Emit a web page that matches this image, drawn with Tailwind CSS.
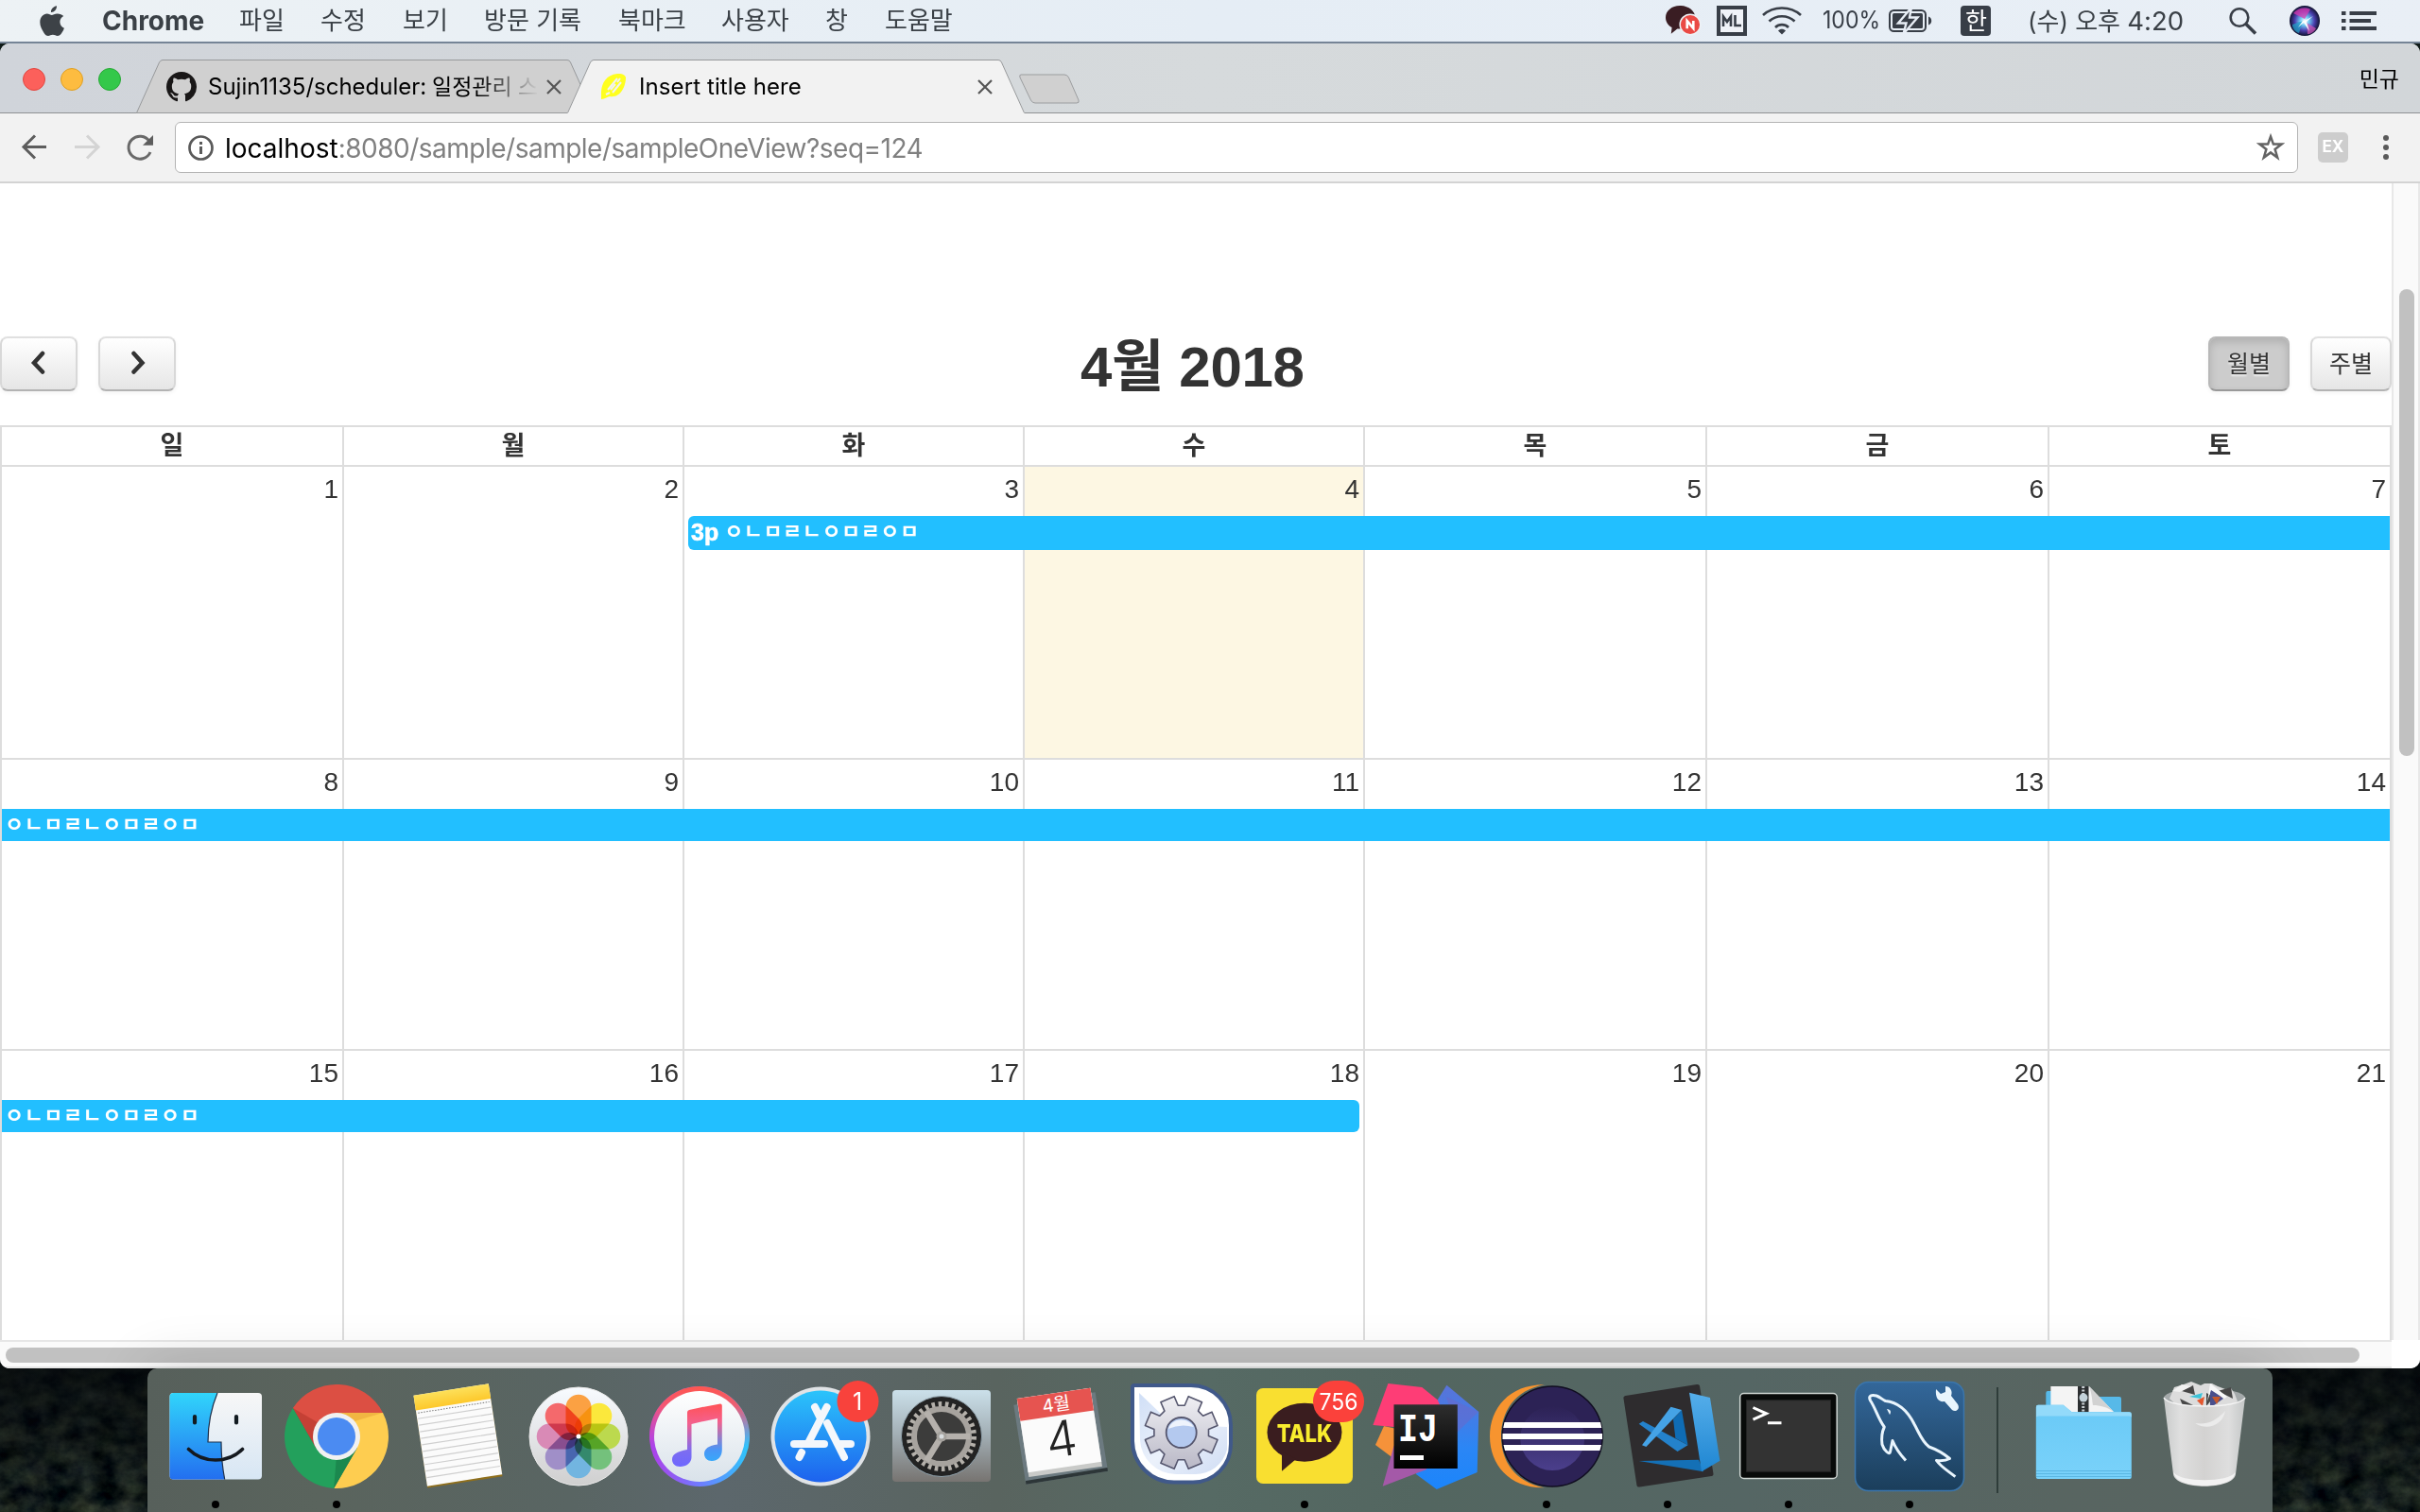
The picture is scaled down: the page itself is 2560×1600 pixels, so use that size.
<!DOCTYPE html>
<html lang="ko">
<head>
<meta charset="utf-8">
<title>Insert title here</title>
<script src="https://cdn.jsdelivr.net/npm/@tailwindcss/browser@4"></script>
</head>
<body class="relative h-[1600px] w-[2560px] overflow-hidden bg-[#101b19] font-['Inter','Noto_Sans_CJK_KR',sans-serif]">

<!-- Desktop wallpaper: dark forest -->
<svg class="absolute left-0 top-[1430px]" width="2560" height="170">
  <defs>
    <filter id="forest" x="0" y="0" width="100%" height="100%" color-interpolation-filters="sRGB">
      <feTurbulence type="fractalNoise" baseFrequency="0.04 0.05" numOctaves="5" seed="8"/>
      <feColorMatrix values="0.36 0.04 0 0 -0.115  0.38 0 0 0 -0.07  0.26 0 0.06 0 -0.05  0 0 0 0 1"/>
    </filter>
    <linearGradient id="dusk" x1="0" y1="0" x2="0" y2="1"><stop offset="0" stop-color="#05080b" stop-opacity=".8"/><stop offset="1" stop-color="#05080b" stop-opacity="0"/></linearGradient>
  </defs>
  <rect width="2560" height="170" fill="#14201d"/>
  <rect width="2560" height="170" filter="url(#forest)"/>
  <rect width="2560" height="170" fill="url(#dusk)"/>
</svg>

<div class="relative flex h-[1448px] flex-col">
  <!-- Menu bar -->
  <header class="flex h-[46px] shrink-0 items-center border-b-2 border-[#758496] bg-gradient-to-r from-[#edf2f5] via-[#e5edf5] to-[#e9eff6] text-[26px] leading-[44px] text-[#3a4046]">
    <svg class="ml-[42px] mr-[40px] shrink-0" width="26" height="32" viewBox="0 0 26 32" fill="#3d4247"><path d="M18 .2c.3 3.600-2.900 6.900-6 6.700C11.600 3.600 14.800.5 18 .2zM25.200 10.900c-2.500 1.500-3.900 3.600-3.800 6.400.1 3.200 1.800 5.400 4.500 6.500-.6 2-1.700 3.900-3 5.600-1.100 1.500-2.300 2.500-4.100 2.500-1.900 0-2.600-1.100-4.900-1.100-2.300 0-3.100 1.100-4.900 1.100-1.900 0-3.200-1.300-4.400-3C2.100 25.400.3 21.500.3 17.600.3 11.800 4 8.600 7.700 8.500c2 0 3.900 1.400 5.100 1.400 1.200 0 3.300-1.600 5.900-1.500 2.700.1 5 .9 6.500 2.500z"/></svg>
    <span class="w-[145px] shrink-0 text-[28px] font-bold">Chrome</span>
    <span class="w-[86px] shrink-0">파일</span>
    <span class="w-[87px] shrink-0">수정</span>
    <span class="w-[86px] shrink-0">보기</span>
    <span class="w-[142px] shrink-0">방문 기록</span>
    <span class="w-[109px] shrink-0">북마크</span>
    <span class="w-[110px] shrink-0">사용자</span>
    <span class="w-[63px] shrink-0">창</span>
    <span class="w-[120px] shrink-0">도움말</span>
    <div class="ml-auto flex h-full items-center">
      <svg width="246" height="44" viewBox="1758 0 246 44" class="shrink-0">
        <path d="M1777 6c-8.500 0-15 5.500-15 12.500 0 4.600 2.600 8.400 6.600 10.600l-.8 6.600 6.500-5.200c12 .8 19-5 19-12C1793.300 11.500 1786 6 1777 6z" fill="#3a1d23"/>
        <circle cx="1788" cy="26" r="10.800" fill="#ea4a45" stroke="#eef2f6" stroke-width="1.500"/>
        <path d="M1784.700 30.300v-8.200l6.600 7.800v-8" fill="none" stroke="#fff" stroke-width="2.600"/>
        <rect x="1818" y="8" width="28" height="28" fill="#f0f3f8" stroke="#383e47" stroke-width="4"/>
        <path d="M1823 28V17.500l4 5.500 4-5.500V28M1835.500 16v11h6.500" fill="none" stroke="#383e47" stroke-width="2.600"/>
        <g fill="none" stroke="#383e47" stroke-width="2.700"><path d="M1865 16c11-10 29-10 40 0M1871.500 22.500c7.500-7 19.500-7 27 0M1878 29c4-3.800 10-3.800 14 0"/></g>
        <path d="M1881 32.500c2.300-2.300 5.700-2.300 8 0l-4 4z" fill="#383e47"/>
        <text x="1928" y="30" font-size="25" fill="#383e47" textLength="61" lengthAdjust="spacingAndGlyphs">100%</text>
      </svg>
      <svg width="142" height="44" viewBox="1995 0 142 44" class="-ml-[9px] shrink-0">
        <rect x="1999" y="11" width="38" height="22" rx="4.500" fill="none" stroke="#383e47" stroke-width="2"/>
        <rect x="2002" y="14" width="32" height="16" rx="1.500" fill="#383e47"/>
        <path d="M2040 17.500c4.300 1 4.300 8 0 9z" fill="#383e47"/>
        <path d="M2022 8l-14 16.500h8.500L2013.500 36l15-17.500h-8.500z" fill="#383e47" stroke="#e8eef6" stroke-width="2.400"/>
        <rect x="2074" y="6" width="32" height="32" rx="4" fill="#383e47"/>
        <text x="2079" y="31" font-size="25" fill="#fff">한</text>
      </svg>
      <span class="w-[212px] shrink-0 whitespace-nowrap pl-[8px]">(수) 오후 <span class="text-[27.500px]">4:20</span></span>
      <svg width="211" height="44" viewBox="2349 0 211 44" class="shrink-0">
        <circle cx="2369" cy="18.500" r="9.300" fill="none" stroke="#383e47" stroke-width="2.600"/><path d="M2375.500 25l10.500 10.500" stroke="#383e47" stroke-width="3.600"/>
        <defs><radialGradient id="siri"><stop offset="0" stop-color="#fff"/><stop offset=".3" stop-color="#6cc8f2"/><stop offset=".65" stop-color="#4a3fae"/><stop offset="1" stop-color="#10132e"/></radialGradient></defs>
        <circle cx="2438" cy="22" r="16" fill="url(#siri)"/>
        <path d="M2426 14c4-5 12-7 18-4l-6 10z" fill="#d93ab0" opacity=".75"/><path d="M2440 24l10 6c-2 4-6 6-9 6z" fill="#d257b5" opacity=".7"/><path d="M2425 26l11-4-4 13c-4-1-7-5-7-9z" fill="#1fa7c9" opacity=".7"/>
        <path d="M2428 23l10-1 9-5-7 6 3 10-6-9-6 5 5-7z" fill="#fff" opacity=".9"/>
        <path d="M2477 12h4.500v4h-4.500zM2477 20h4.500v4h-4.500zM2477 28h4.500v4h-4.500zM2485.500 12h28.500v4h-28.500zM2485.500 20h22.500v4h-22.500zM2485.500 28h28.500v4h-28.500z" fill="#383e47"/>
      </svg>
    </div>
  </header>

  <!-- Browser window -->
  <div class="flex h-[1402px] flex-col overflow-hidden rounded-t-[10px] rounded-b-[10px] bg-white">
    <!-- Tab strip -->
    <div class="flex h-[74px] shrink-0 border-b border-[#8f9193] bg-gradient-to-r from-[#d0d4da] via-[#d6dadc] to-[#d2d6d9]">
      <div class="flex w-[144px] shrink-0 gap-4 pl-6 pt-[26px]">
        <i class="size-6 rounded-full border border-[#e2463f] bg-[#fc605b]"></i>
        <i class="size-6 rounded-full border border-[#dfa023] bg-[#fdbc40]"></i>
        <i class="size-6 rounded-full border border-[#27a935] bg-[#34c84a]"></i>
      </div>
      <div class="relative h-[74px] w-[484px] shrink-0">
        <svg class="absolute left-0 top-0" width="484" height="74" viewBox="0 0 484 74"><path d="M.5 73.500L24.500 20Q26 17.500 28 17.500H456Q458.500 17.500 459.500 20L483.500 73.500z" fill="#d0d0d0" stroke="#97999b"/></svg>
        <div class="relative flex h-full pl-8 pt-[18px]">
          <svg class="mt-[12px] shrink-0" width="32" height="32" viewBox="0 0 16 16" fill="#191717"><path d="M8 0C3.580 0 0 3.580 0 8c0 3.540 2.290 6.530 5.470 7.590.4.070.55-.17.55-.38 0-.19-.01-.82-.01-1.490-2.010.37-2.530-.49-2.690-.94-.09-.23-.48-.94-.82-1.130-.28-.15-.68-.52-.01-.53.63-.01 1.080.58 1.230.82.72 1.210 1.870.87 2.330.66.070-.52.280-.87.510-1.070-1.780-.2-3.640-.89-3.640-3.950 0-.87.310-1.590.82-2.150-.08-.2-.36-1.020.08-2.120 0 0 .67-.21 2.200.82.640-.18 1.320-.27 2-.27s1.360.090 2 .27c1.530-1.040 2.200-.82 2.200-.82.440 1.100.160 1.920.080 2.120.510.560.820 1.270.820 2.150 0 3.070-1.870 3.750-3.650 3.950.290.250.540.730.540 1.480 0 1.070-.010 1.930-.010 2.200 0 .210.150.460.550.380A8.010 8.010 0 0 0 16 8c0-4.420-3.580-8-8-8z"/></svg>
          <span class="ml-3 w-[351px] shrink-0 whitespace-nowrap text-[24px] leading-[56px] text-black [mask-image:linear-gradient(to_right,black_285px,transparent_350px)]">Sujin1135/scheduler: <span class="-ml-px text-[23px]">일정관리 스</span></span>
          <svg class="ml-[7px] mt-[20px] shrink-0" width="16" height="16" stroke="#555" stroke-width="2.200"><path d="M1 1l14 14M15 1L1 15"/></svg>
        </div>
      </div>
      <div class="relative -ml-[28px] h-[74px] w-[484px] shrink-0">
        <svg class="absolute left-0 top-0" width="484" height="74" viewBox="0 0 484 74"><path d="M0 74L24.500 20Q26 17.500 28 17.500H456Q458.500 17.500 459.500 20L484 74z" fill="#f2f2f2"/><path d="M.5 73.500L24.500 20Q26 17.500 28 17.500H456Q458.500 17.500 459.500 20L483.500 73.500" fill="none" stroke="#97999b"/></svg>
        <div class="relative flex h-full pl-9 pt-[18px]">
          <svg class="mt-[14px] shrink-0" width="27" height="27" viewBox="0 0 27 27"><path d="M0 27C-1 14 2 2 17 0c5-.6 9 2 9 4 0 10-6 22-17 20-2 0-5 3-9 3z" fill="#ffff1f"/><path d="M7 17L17 5M12 20L21 9M9 20l-4 2M15 11l-5 6M20 5l-3 4" stroke="#f2f2f2" stroke-width="2"/></svg>
          <span class="ml-[13px] w-[358px] shrink-0 whitespace-nowrap text-[24px] leading-[56px] tracking-[0.1px] text-black">Insert title here</span>
          <svg class="mt-[20px] shrink-0" width="16" height="16" stroke="#555" stroke-width="2.200"><path d="M1 1l14 14M15 1L1 15"/></svg>
        </div>
      </div>
      <svg class="-ml-[7px] mt-[32px] shrink-0" width="66" height="32" viewBox="0 0 66 32"><path d="M3 1H49Q52 1 53.500 4L64 28Q65 31 62 31H18Q15 31 13.500 28L2 4Q1 1 3 1z" fill="#d0d0d0" stroke="#9b9d9f"/></svg>
      <span class="ml-auto mr-[22px] text-[23px] leading-[76px] text-black">민규</span>
    </div>

    <!-- Toolbar -->
    <div class="flex h-[74px] shrink-0 border-b-2 border-[#d3d3d3] bg-[#f2f2f2] pt-[9px]">
      <svg width="185" height="54" viewBox="0 129 185 54" class="shrink-0" fill="none" stroke-width="3">
        <path d="M49 155.500H25M37 143.500l-12 12 12 12" stroke="#5d5d5d"/>
        <path d="M79 155.500h24M92 143.500l12 12-12 12" stroke="#d4d4d4"/>
        <path d="M158 149.500A12 12 0 1 0 159 161" stroke="#696969"/><path d="M162 143v10.800h-11z" fill="#5d5d5d"/>
      </svg>
      <div class="flex h-[54px] w-[2246px] items-center rounded-[6px] border border-[#b4b4b4] bg-white">
        <svg class="ml-3 shrink-0" width="29" height="29" viewBox="0 0 29 29"><circle cx="14.500" cy="14.500" r="12" fill="none" stroke="#5a5a5a" stroke-width="2.700"/><path d="M13 8h3v3h-3zM13 13h3v8h-3z" fill="#5a5a5a"/></svg>
        <span class="ml-[11px] whitespace-nowrap pt-[2px] text-[28px] leading-[50px] tracking-[-0.5px] text-[#808080]"><span class="tracking-normal text-black">localhost</span>:8080/sample/sample/sampleOneView?seq=124</span>
        <svg class="ml-auto mr-[13px]" width="30" height="30" viewBox="0 0 30 30"><path d="M15 3.500l2.900 8.100h8.600l-6.900 5.300 2.600 8.800L15 20.400l-7.200 5.300 2.600-8.800-6.900-5.300h8.600z" fill="none" stroke="#636363" stroke-width="2.500"/></svg>
      </div>
      <div class="ml-[21px] mt-[11px] flex size-8 items-center justify-center rounded-[5px] bg-[#cdcdcd] text-[17px] font-bold text-white">EX</div>
      <div class="ml-[37px] mt-[14px] flex flex-col gap-1">
        <i class="size-[6px] rounded-full bg-[#5a5a5a]"></i><i class="size-[6px] rounded-full bg-[#5a5a5a]"></i><i class="size-[6px] rounded-full bg-[#5a5a5a]"></i>
      </div>
    </div>

    <!-- Page -->
    <div class="flex h-[1224px] shrink-0 overflow-hidden font-['Liberation_Sans','Noto_Sans_CJK_KR',sans-serif] text-[#333]">
      <main class="flex w-[2530px] shrink-0 flex-col pt-[162px]">
        <div class="flex h-[94px] shrink-0">
          <div class="flex w-[1143px] shrink-0 gap-[22px]">
            <button class="flex h-[58px] w-[82px] justify-center rounded-[8px] border-2 border-b-[#b3b3b3] border-l-[#d8d8d8] border-r-[#d8d8d8] border-t-[#e0e0e0] bg-gradient-to-b from-white to-[#e6e6e6] pt-[13px] shadow-[0_2px_4px_rgba(0,0,0,0.05)]"><svg width="20" height="26" viewBox="0 0 20 26"><path d="M14 3L5 13l9 9.500" fill="none" stroke="#333" stroke-width="4.500" stroke-linecap="round"/></svg></button>
            <button class="flex h-[58px] w-[82px] justify-center rounded-[8px] border-2 border-b-[#b3b3b3] border-l-[#d8d8d8] border-r-[#d8d8d8] border-t-[#e0e0e0] bg-gradient-to-b from-white to-[#e6e6e6] pt-[13px] shadow-[0_2px_4px_rgba(0,0,0,0.05)]"><svg width="20" height="26" viewBox="0 0 20 26"><path d="M6.500 3L15.500 13l-9 9.500" fill="none" stroke="#333" stroke-width="4.500" stroke-linecap="round"/></svg></button>
          </div>
          <h2 class="whitespace-nowrap text-[60px] font-bold leading-[66px] tracking-[-0.3px]">4월 2018</h2>
          <div class="ml-auto flex gap-[22px] text-[25px] leading-[52px]">
            <button class="h-[58px] w-[86px] rounded-[8px] border-2 border-[#b8b8b8] border-b-[#999] bg-[#ccc] shadow-[inset_0_4px_8px_rgba(0,0,0,0.14),0_2px_4px_rgba(0,0,0,0.05)] [text-shadow:0_2px_2px_rgba(255,255,255,0.75)]">월별</button>
            <button class="h-[58px] w-[86px] rounded-[8px] border-2 border-b-[#b3b3b3] border-l-[#d8d8d8] border-r-[#d8d8d8] border-t-[#e0e0e0] bg-gradient-to-b from-white to-[#e6e6e6] shadow-[0_2px_4px_rgba(0,0,0,0.05)]">주별</button>
          </div>
        </div>

        <div class="shrink-0 border-l-2 border-t-2 border-[#ddd]">
          <div id="days" class="grid h-[42px] grid-cols-[362px_360px_360px_360px_362px_362px_362px] border-b-2 border-[#ddd] text-center text-[27px] font-bold leading-[40px]"></div>
          <div id="weeks"></div>
        </div>
      </main>
      <!-- Vertical scrollbar -->
      <div class="w-[30px] border-l-2 border-r-2 border-[#e8e8e8] bg-[#fafafa] pl-[6px] pt-[112px]">
        <div class="h-[494px] w-4 rounded-full bg-[#c1c1c1]"></div>
      </div>
    </div>
    <!-- Horizontal scrollbar -->
    <div class="flex h-[30px] shrink-0">
      <div class="w-[2530px] border-b-2 border-t-2 border-[#e6e6e6] bg-[#fafafa] pl-[6px] pt-[6px]"><div class="h-4 w-[2490px] rounded-full bg-[#c1c1c1]"></div></div>
      <div class="grow bg-white"></div>
    </div>
  </div>
</div>

<!-- Dock -->
<div class="absolute left-[156px] top-[1448px] flex h-[152px] w-[2248px] rounded-t-[10px] bg-[linear-gradient(90deg,#57605b_0%,#5a645d_8%,#596563_20%,#5c676c_27%,#59645f_40%,#566a64_50%,#536660_60%,#556664_75%,#586561_90%,#586461_100%)] pl-2 shadow-[0_0_60px_rgba(0,0,0,0.16)]">
  <svg class="shrink-0" width="128" height="152"><defs><linearGradient id="fb" x1="0" y1="0" x2="0" y2="1"><stop offset="0" stop-color="#31d5fb"/><stop offset="1" stop-color="#236ff0"/></linearGradient><linearGradient id="fw" x1="0" y1="0" x2="0" y2="1"><stop offset="0" stop-color="#f7f7f7"/><stop offset="1" stop-color="#d7e6f4"/></linearGradient></defs>
    <rect x="15.500" y="26" width="97.500" height="91.500" rx="4" fill="url(#fw)"/>
    <path d="M66 26Q56 50 56 78H70Q70 98 73.700 117.500H19.500a4 4 0 0 1-4-4V30a4 4 0 0 1 4-4z" fill="url(#fb)"/>
    <path d="M66 26Q56 50 56 78H70Q70 98 73.700 117.500" fill="none" stroke="#20304a" stroke-width="1.200"/>
    <path d="M42 51v6.500M86 51v6.500" stroke="#111a20" stroke-width="4.200" stroke-linecap="round"/>
    <path d="M35.500 85.500Q47 97 64 97T92.500 85.500" fill="none" stroke="#15191f" stroke-width="3.600" stroke-linecap="round"/>
    <circle cx="64" cy="144" r="4"/></svg>

  <svg class="shrink-0" width="128" height="152"><path d="M17.850 42.100A55 55 0 0 1 113 47H64L42.350 84.500z" fill="#dc4f43"/><path d="M113 47A55 55 0 0 1 61.150 126.900L85.650 84.500 64 47z" fill="#fecd50"/><path d="M61.150 126.900A55 55 0 0 1 17.850 42.100L42.350 84.500 85.650 84.500z" fill="#23a05c"/><path d="M64 47h49l-30 9z" fill="#d98d28" opacity=".35"/><path d="M17.850 42.100l24.500 42.400 4-26z" fill="#8d1f18" opacity=".3"/><path d="M61.150 126.900l24.500-42.400-22 12z" fill="#0d5b33" opacity=".35"/><circle cx="64" cy="72" r="25" fill="#f1f1f1"/><circle cx="64" cy="72" r="20" fill="#4b8bf2"/><circle cx="64" cy="144" r="4"/></svg>

  <svg class="shrink-0" width="128" height="152"><defs><linearGradient id="ny" x1="0" y1="0" x2="0" y2="1"><stop offset="0" stop-color="#fde05a"/><stop offset="1" stop-color="#fdc82b"/></linearGradient></defs><g transform="matrix(.991 -.155 .149 .989 17.500 28.700)"><rect y="1.500" width="80" height="97.500" fill="#8f6f1c"/><rect width="80" height="97" fill="#fbfbfb"/><rect width="80" height="16" fill="url(#ny)"/><path d="M2 19h76" stroke="#777" stroke-dasharray="1.500 1.500"/><path d="M1 25h78M1 32h78M1 39h78M1 46h78M1 53h78M1 60h78M1 67h78M1 74h78M1 81h78M1 88h78" stroke="#cfcfcf" stroke-width="1.200"/></g></svg>

  <svg class="shrink-0" width="128" height="152"><defs><linearGradient id="pw" x1="0" y1="0" x2="0" y2="1"><stop offset="0" stop-color="#f8fbff"/><stop offset="1" stop-color="#cfcfcf"/></linearGradient></defs><circle cx="64" cy="72" r="52" fill="url(#pw)" stroke="#e9e9e9"/>
    <g class="isolate"><g class="[&>rect]:mix-blend-multiply"><rect x="50.500" y="27.700" width="27" height="44.300" rx="13.500" fill="#fba143"/><rect x="50.500" y="27.700" width="27" height="44.300" rx="13.500" fill="#fbe83c" transform="rotate(45 64 72)"/><rect x="50.500" y="27.700" width="27" height="44.300" rx="13.500" fill="#bcd94e" transform="rotate(90 64 72)"/><rect x="50.500" y="27.700" width="27" height="44.300" rx="13.500" fill="#74c17c" transform="rotate(135 64 72)"/><rect x="50.500" y="27.700" width="27" height="44.300" rx="13.500" fill="#72b5e0" transform="rotate(180 64 72)"/><rect x="50.500" y="27.700" width="27" height="44.300" rx="13.500" fill="#a08fc8" transform="rotate(225 64 72)"/><rect x="50.500" y="27.700" width="27" height="44.300" rx="13.500" fill="#d98ab6" transform="rotate(270 64 72)"/><rect x="50.500" y="27.700" width="27" height="44.300" rx="13.500" fill="#f4696c" transform="rotate(315 64 72)"/></g></g><circle cx="64" cy="72" r="2.500" fill="#fff"/></svg>

  <svg class="shrink-0" width="128" height="152"><defs><linearGradient id="i1"><stop offset="0" stop-color="#b03ee8"/><stop offset=".5" stop-color="#6f7bff"/><stop offset="1" stop-color="#2cc8fb"/></linearGradient><linearGradient id="i2" x1="0" y1="0" x2="0" y2="1"><stop offset="0" stop-color="#ff564e"/><stop offset=".2" stop-color="#fd5768" stop-opacity=".9"/><stop offset=".6" stop-color="#f0509a" stop-opacity="0"/></linearGradient><linearGradient id="i3" x1="0" y1="0" x2="0" y2="1"><stop offset="0" stop-color="#fff"/><stop offset="1" stop-color="#d9e2ea"/></linearGradient><linearGradient id="i4" gradientUnits="userSpaceOnUse" x1="66" y1="38" x2="66" y2="104"><stop offset="0" stop-color="#ff5257"/><stop offset=".3" stop-color="#f4608c"/><stop offset=".75" stop-color="#7d6df0"/><stop offset="1" stop-color="#6d67ff"/></linearGradient><linearGradient id="i5" gradientUnits="userSpaceOnUse" x1="66" y1="38" x2="66" y2="98"><stop offset="0" stop-color="#ff5257"/><stop offset=".3" stop-color="#f4608c"/><stop offset=".8" stop-color="#4b95f5"/><stop offset="1" stop-color="#37a8fa"/></linearGradient></defs><circle cx="64" cy="72" r="53" fill="url(#i1)"/><circle cx="64" cy="72" r="53" fill="url(#i2)"/><circle cx="64" cy="72" r="48" fill="url(#i3)"/>
    <path d="M51 46.500Q51 44.500 53 44L68 40.700V56L55.500 59V94C55.500 100 50 104 43.500 104 38 104 35 100.500 35 96.500 35 91 40 88 51 86z" fill="url(#i4)"/><path d="M67.500 41L86 37.500Q87.800 37.500 87.800 39.500V86C87.800 94 83 98 77 98 72 98 69 94.500 69 90.500 69 85 74 81.500 83 80.500V53L67.500 56.200z" fill="url(#i5)"/></svg>

  <svg class="shrink-0" width="128" height="152"><defs><linearGradient id="as" x1="0" y1="0" x2="0" y2="1"><stop offset="0" stop-color="#2bc4fb"/><stop offset="1" stop-color="#1d62ee"/></linearGradient></defs><circle cx="64" cy="72" r="52.500" fill="#e0e3e6"/><circle cx="64" cy="72" r="48.500" fill="url(#as)"/><g stroke="#f4f7fb" stroke-width="8" stroke-linecap="round" fill="none"><path d="M70.600 41L51 79M58 41l6 12M71 58l18 36M36 80h32M85 80h11M44 89l-2.500 5"/></g><circle cx="103.500" cy="35" r="22" fill="#f8423c"/><text x="103" y="44" font-size="25" fill="#fff" text-anchor="middle">1</text></svg>

  <svg class="shrink-0" width="128" height="152"><defs><linearGradient id="sp" x1="0" y1="0" x2="0" y2="1"><stop offset="0" stop-color="#cbe0ea"/><stop offset=".5" stop-color="#a1adb3"/><stop offset="1" stop-color="#777471"/></linearGradient></defs><rect x="12" y="23" width="104" height="97" rx="4" fill="url(#sp)"/><circle cx="64" cy="72" r="42.500" fill="#232323" stroke="#8fa0aa"/><circle cx="64" cy="72" r="34" fill="none" stroke="#b4b0aa" stroke-width="6" stroke-dasharray="3.560 3.560"/><circle cx="64" cy="72" r="29" fill="#3c3c3b" stroke="#a7a39e" stroke-width="6"/><path d="M64 72L48 46M64 72h30M64 72L48 98" stroke="#b5b1ac" stroke-width="6.500"/><circle cx="64" cy="72" r="5.500" fill="#a5a29d"/><circle cx="64" cy="72" r="2.500" fill="#d8dcde"/></svg>

  <svg class="shrink-0" width="128" height="152"><path d="M12.300 38.700L98.600 25.300 112 108.700 25.300 122.700z" fill="#6c7a80"/><path d="M25.300 122.700L112 108.700 111.500 105 25 119z" fill="#2d3638"/><g transform="matrix(.99 -.144 .15 .989 15.800 32)"><rect width="78.400" height="84" fill="#c9cac8"/><rect width="78.400" height="79" fill="#fbfbfb"/><rect width="78.400" height="24" fill="#e65450"/><text x="40" y="18.500" font-size="19" fill="#fff" text-anchor="middle">4월</text><text x="40" y="67.500" font-size="52" font-weight="300" fill="#222" text-anchor="middle">4</text></g></svg>

  <svg class="shrink-0" width="128" height="152"><defs><linearGradient id="ga" x1="0" y1="0" x2="1" y2="1"><stop offset="0" stop-color="#a9c4ef"/><stop offset=".5" stop-color="#dbe6f8"/><stop offset="1" stop-color="#a9c0ea"/></linearGradient><linearGradient id="gg" x1="0" y1="0" x2="0" y2="1"><stop offset="0" stop-color="#f0f0f4"/><stop offset="1" stop-color="#b9b8c6"/></linearGradient></defs>
    <path d="M12 18H72A42 42 0 0 1 114 60V80A40 40 0 0 1 74 120.500H54A44 44 0 0 1 10 77V20A2 2 0 0 1 12 18z" fill="#fff" stroke="#40598a" stroke-width="4"/>
    <path d="M17 26L40 48 70 60 110 62V86A34 34 0 0 1 76 112H56A38 38 0 0 1 18 76z" fill="url(#ga)" opacity=".55"/>
    <g transform="translate(61.700 68)"><path id="cog" fill="url(#gg)" stroke="#55566e" stroke-width="1.600" stroke-linejoin="round"/><circle r="16" fill="#b4c9ef" stroke="#55566e" stroke-width="1.800"/><path d="M-14-4A15 15 0 0 1 13-6 40 40 0 0 0-14-4z" fill="#eef3fc"/></g></svg>

  <svg class="shrink-0" width="128" height="152"><rect x="13" y="21" width="102" height="101" rx="7" fill="#f9df30"/><ellipse cx="64" cy="67.700" rx="39.500" ry="31" fill="#3a1d1f"/><path d="M40 88v20.700L55 96z" fill="#3a1d1f"/><text x="34.700" y="78" font-size="26" font-weight="800" fill="#f9ed2e" textLength="58.500" lengthAdjust="spacingAndGlyphs">TALK</text><rect x="73" y="13" width="54" height="44" rx="22" fill="#fb413b"/><text x="100" y="43.500" font-size="24" fill="#fff" text-anchor="middle" textLength="41" lengthAdjust="spacingAndGlyphs">756</text><circle cx="64" cy="144" r="4"/></svg>

  <svg class="shrink-0" width="128" height="152"><defs><linearGradient id="jb" x1="0" y1="0" x2="0" y2="1"><stop offset="0" stop-color="#5a73d8"/><stop offset=".6" stop-color="#2b86f5"/><stop offset="1" stop-color="#1b85fb"/></linearGradient><linearGradient id="jk" x1="0" y1="0" x2="0" y2="1"><stop offset="0" stop-color="#2e2e2e"/><stop offset="1" stop-color="#000"/></linearGradient></defs><path d="M20 61L11 81 31 96 60 70z" fill="#f5923a"/><path d="M86.400 17.700L120.300 46 118.700 110 75.800 128 54 112 60 60z" fill="url(#jb)"/><path d="M97 68L120 46 86 30z" fill="#6d66c8" opacity=".5"/><path d="M30.500 82L18.700 124.700 65 107V70z" fill="#a459a8"/><path d="M24.400 16L60.300 20 76.600 33.300 90 62 30.500 62 8.400 60z" fill="#fe3d76"/><rect x="30.500" y="38.300" width="67.300" height="67.700" fill="url(#jk)"/><text x="35" y="76.500" font-family="Liberation Mono" font-weight="700" font-size="43" fill="#fff" textLength="42" lengthAdjust="spacingAndGlyphs">IJ</text><rect x="37" y="92" width="25" height="5" fill="#fff"/></svg>

  <svg class="shrink-0" width="128" height="152"><defs><linearGradient id="ec" x1="0" y1="0" x2="0" y2="1"><stop offset="0" stop-color="#2c2255"/><stop offset="1" stop-color="#4b3f8c"/></linearGradient></defs><path d="M61.700 17.300C25 17 4 42 4 72s21 55 57.700 54.300C30 120 16 98 16 72S30 23 61.700 17.300z" fill="#f7942f"/><circle cx="70.200" cy="72" r="53" fill="#2c2255" stroke="#100d20" stroke-width="1.500"/><circle cx="70.200" cy="74" r="34" fill="url(#ec)"/><path d="M19.500 57h101.500l1.300 6H18.200zM17.500 69h105.500v6H17.500zM18.500 81h103.500l-1.600 6H20z" fill="#fff"/><circle cx="64" cy="144" r="4"/></svg>

  <svg class="shrink-0" width="128" height="152"><defs><linearGradient id="vs" x1="0" y1="0" x2="0" y2="1"><stop offset="0" stop-color="#55aeea"/><stop offset="1" stop-color="#1f86d2"/></linearGradient></defs><path d="M19.500 29Q17 29.500 17.500 32L31.500 124Q32 126 34.500 125.500L110.500 114Q113 113.500 112.400 111L98 18.500Q97.500 16.500 95 17z" fill="#2e2c2e"/><path d="M33.700 98L97 96.700 102 109.300z" fill="#1470b6"/><path d="M87 25.700L109 31 119.400 97.700 100 109.300z" fill="url(#vs)"/><path d="M79 44L85.500 81.300 72.400 74 70 53.700z" fill="#0f6cb4"/><path d="M33.700 58.700L38 56 85.500 81.300 74.500 88z" fill="#2482cb"/><path d="M67.500 40.700L79 44 41.400 83 37 81.300z" fill="#45a3e6"/><circle cx="64" cy="144" r="4"/></svg>

  <svg class="shrink-0" width="128" height="152"><rect x="12.700" y="26.500" width="102.500" height="90" rx="4" fill="#080a09" stroke="#cfd6d3" stroke-width="1.500"/><rect x="19.500" y="33.700" width="89" height="75.600" fill="#333" stroke="#222"/><path d="M26.500 41.500l14 6.300-14 6.300M42 57.800h14.500" fill="none" stroke="#fff" stroke-width="3"/><circle cx="64" cy="144" r="4"/></svg>

  <svg class="shrink-0" width="128" height="152"><defs><linearGradient id="my" x1="0" y1="0" x2="0" y2="1"><stop offset="0" stop-color="#33679a"/><stop offset="1" stop-color="#1b3e5b"/></linearGradient></defs><rect x="6.500" y="14.500" width="115" height="115" rx="14" fill="url(#my)" stroke="#3b76ac" stroke-width="1.500"/><path d="M60 97.500C54 91 49 84 46 76.500L43.500 88.500C43 92 37 87 35 80.500 34 73 35 67 37.300 62 31 54 28 42 22.500 34 20 29 24 27.500 29 29 33 30.500 36 33.500 38.500 34.500 54 36 63 47 69 59 75 70 77 77 84.600 83 93 86 100 90 106.500 95.500 102 98 97 98 92.500 97.500 97 104 104 108 112.400 114.700" fill="none" stroke="#e9f5fd" stroke-width="3" stroke-linejoin="round"/><path d="M40 43c4 .5 5 3 3 6z" fill="#e9f5fd"/><path d="M92 22l5 5 5-2 0-6c5 0 8 5 6 10l7 9c3 5-2 9-6 6l-8-9c-6 1-10-3-9-13z" fill="#e9f5fd"/><circle cx="64" cy="144" r="4"/></svg>

  <div class="flex w-14 shrink-0 pl-[28px] pt-5"><div class="h-[112px] w-[2px] bg-[#2f3d3a]"></div></div>

  <svg class="shrink-0" width="128" height="152"><defs><linearGradient id="fo" x1="0" y1="0" x2="0" y2="1"><stop offset="0" stop-color="#69c9f6"/><stop offset="1" stop-color="#7ad2fa"/></linearGradient></defs><path d="M24.300 26a2 2 0 0 1 2-2H50l6 6H102a2 2 0 0 1 2 2V60H24.300z" fill="#57b9e8"/><path d="M29.400 19H70L96 46H29.400z" fill="#f4f4f4"/><path d="M70 19c3 8 3 14 4 20 8 0 15 2 22 7z" fill="#d2d2d2"/><rect x="58" y="19" width="11.500" height="28" fill="#2c2f31"/><path d="M63.700 19v28" stroke="#c9cfd3" stroke-width="3" stroke-dasharray="2 1.500"/><circle cx="64" cy="31" r="4.500" fill="#c3d2da"/><path d="M13.800 41a2.300 2.300 0 0 1 2.300-2.300H42.800L51.700 46.300H112.500a2.300 2.300 0 0 1 2.300 2.300V115a2 2 0 0 1-2 2H15.800a2 2 0 0 1-2-2z" fill="url(#fo)"/><path d="M14 52V41Q14 38.700 16 38.700H42.800L51.700 46.300H112.500Q114.800 46.300 114.800 48.600V52Q114.800 50.500 112 50.500H17Q14 50.500 14 52z" fill="#93dafa"/><path d="M14 108.500h100.800M14 111.500h100.800M14 114.500h100.800" stroke="#5ab6e2"/></svg>

  <svg class="shrink-0" width="128" height="152"><defs><linearGradient id="tr"><stop offset="0" stop-color="#c9cbcb"/><stop offset=".2" stop-color="#dfdfdf"/><stop offset=".5" stop-color="#d3d2d1"/><stop offset=".8" stop-color="#dedede"/><stop offset="1" stop-color="#c4c7c7"/></linearGradient></defs><ellipse cx="64" cy="31" rx="43" ry="10" fill="#a4a9aa"/><path d="M27 32l5-12 10-3 8-3 10 4 4-2 8 0 6 3 8 3 6-1 4 6 3 8-10 6-50 2z" fill="#dcdcdc"/><path d="M40 24l12-6 2 10zM38 32l16 8-12 2zM78 24l14-4 2 12zM66 26l8 4-8 10z" fill="#474747"/><path d="M48 30l14-4-2 6z" fill="#3cc3d8"/><path d="M56 34l8-4-2 10z" fill="#e4572e"/><path d="M70 20l14 12-14 10z" fill="#4a4f8c"/><path d="M72 30l9 0-4 8z" fill="#c65a2c"/><path d="M70 16l18 14-3 2-14-9-4 12z" fill="#f7f7f7"/><path d="M30 24l10-7 10 2-12 6z" fill="#f1f1f1"/><path d="M21 31C26 43 102 43 107 31L97 112C95 129 33 129 31 112z" fill="url(#tr)"/><path d="M31.500 110C38 121 90 121 96.500 110 96 129 33 129 31.500 110z" fill="#f2f2f2"/><path d="M21 31C26 43 102 43 107 31" fill="none" stroke="#f4f4f4" stroke-width="1.500"/><path d="M54 58c12 2 22-2 32-13-2 14-18 22-32 13z" fill="#ebebeb"/></svg>
</div>

<script>
const DAYS = ['일', '월', '화', '수', '목', '금', '토'];
const TITLE = 'ㅇㄴㅁㄹㄴㅇㅁㄹㅇㅁ';
const WEEKS = [
  { height: 'h-[310px]', first: 1, event: 'left-[726px] right-[2px] h-[36px] rounded-l-[6px] pl-[3px]', time: '3p' },
  { height: 'h-[308px]', first: 8, event: 'left-0 right-[2px] h-[34px] pl-[3px]', time: '' },
  { height: 'h-[306px]', first: 15, event: 'left-0 right-[1092px] h-[34px] rounded-r-[6px] pl-[3px]', time: '' },
];
document.getElementById('days').innerHTML = DAYS.map(d => `<div class="border-r-2 border-[#ddd]">${d}</div>`).join('');
document.getElementById('weeks').innerHTML = WEEKS.map((w, i) => `
  <div class="relative grid grid-cols-[362px_360px_360px_360px_362px_362px_362px] text-right text-[28px] leading-[40px] ${w.height} ${i < 2 ? 'border-b-2 border-[#ddd]' : ''}">
    ${DAYS.map((_, d) => `<div class="border-r-2 border-[#ddd] pr-[4px] pt-[4px] ${w.first + d === 4 ? 'bg-[#fdf7e3]' : ''}">${w.first + d}</div>`).join('')}
    <div class="absolute top-[52px] flex bg-[#22bfff] text-left text-white ${w.event}">
      ${w.time ? `<span class="mr-[6px] text-[25px] font-bold leading-[35px] [-webkit-text-stroke:0.6px_white]">${w.time}</span>` : ''}
      <span class="text-[22px] font-bold leading-[34px] tracking-[0.4px]">${TITLE}</span>
    </div>
  </div>`).join('');

// Cog outline, eight teeth
let cog = '';
for (let i = 0; i < 8; i++) {
  const c = i * Math.PI / 4 + Math.PI / 8;
  for (const [a, r] of [[-.27, 29], [-.2, 39], [.2, 39], [.27, 29]]) {
    cog += (cog ? 'L' : 'M') + (r * Math.cos(c + a)).toFixed(1) + ' ' + (r * Math.sin(c + a)).toFixed(1);
  }
}
document.getElementById('cog').setAttribute('d', cog + 'z');
</script>
</body>
</html>
